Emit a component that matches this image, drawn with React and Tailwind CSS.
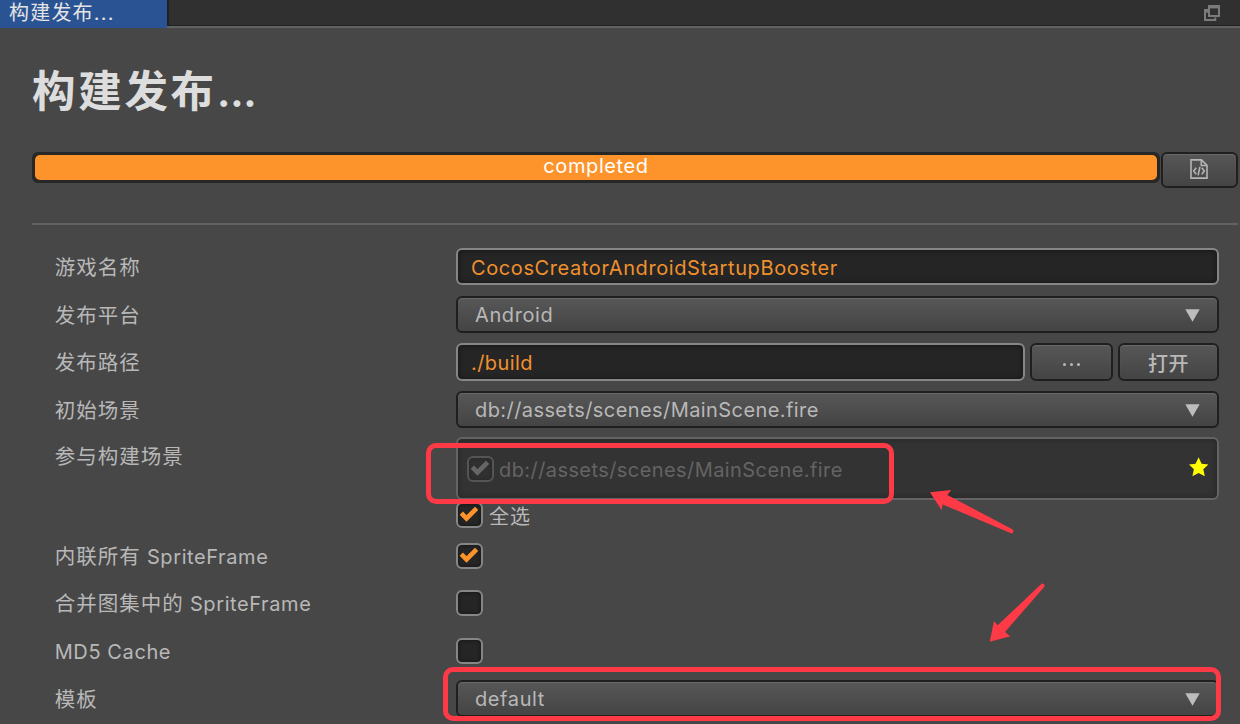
const RAISED =
  "border-2 border-[#1f1f1f] rounded-[6px] bg-linear-to-b from-[#575757] to-[#444444] shadow-[inset_0_1px_1px_#6a6a6a]";
const SUNKEN =
  "border-2 border-[#868686] rounded-[6px] bg-[#252525] shadow-[inset_0_0_4px_1px_#191919]";

function Row({ label, latin, children, className }) {
  return (
    <div className={`flex ${className}`}>
      <div className="w-[402px] shrink-0 pl-[0.7px] leading-[40px] whitespace-nowrap">
        <span className="text-[20.5px] tracking-[1px]">{label}</span>
        {latin && <span className="tracking-[0.6px]">{latin}</span>}
      </div>
      {children}
    </div>
  );
}

function Select({ value, className = "" }) {
  return (
    <div className={`flex h-[37px] w-[763px] items-center justify-between pt-px pr-[17px] pl-[17px] ${RAISED}`}>
      <span className={className}>{value}</span>
      <svg width="15" height="13" viewBox="0 0 15 13" className="mt-px">
        <path d="M0.3 0.3H14.7L7.5 12.8Z" fill="#bdbdbd" />
      </svg>
    </div>
  );
}

function Check({ checked, dim }) {
  return (
    <div
      className={`h-[26px] w-[27px] shrink-0 rounded-[6px] border-2 ${
        dim
          ? "border-[#555555] bg-[#303030] shadow-[inset_0_0_3px_1px_#2a2a2a]"
          : "border-[#868686] bg-[#252525] shadow-[inset_0_0_3px_1px_#191919]"
      }`}
    >
      {checked && (
        <svg width="23" height="22" viewBox="0 0 23 22">
          <path d="M3.3 9.2L8.5 14.4L18.6 4.4" fill="none" stroke={dim ? "#666666" : "#fd942b"} strokeWidth="4.6" />
        </svg>
      )}
    </div>
  );
}

export default function App() {
  return (
    <div className="relative flex h-[724px] w-[1240px] flex-col overflow-hidden bg-[#474747] font-['Inter','Noto_Sans_CJK_SC',sans-serif] text-[20px] tracking-[0.6px] text-[#b8b8b8]">
      <header className="flex h-[28px] shrink-0">
        <div className="w-[167px] bg-[#2a5394] pl-[9px] text-[20px] leading-[26px] tracking-[1.2px] text-[#e4e4e4]">
          构建发布...
        </div>
        <div className="flex h-[28px] flex-1 items-start justify-end border-b-2 border-[#626262] bg-[#303030] pt-[5px] pr-[20px] shadow-[inset_2px_-1px_0_#202020]">
          <svg width="16" height="16" viewBox="0 0 16 16" fill="none" stroke="#7b7b7b">
            <path d="M5 1.5H15V11H5Z" strokeWidth="2" />
            <path d="M4 1.7H16" strokeWidth="3.4" />
            <path d="M4 5H1V15H11.3V12.5" strokeWidth="2" />
            <path d="M0 6H4" strokeWidth="3.4" />
          </svg>
        </div>
      </header>

      <h1 className="mt-[30px] ml-[32px] h-[66px] text-[43.5px] leading-[66px] font-semibold tracking-[2.7px] text-[#dddddd]">
        构建发布<span className="tracking-[-0.8px]">...</span>
      </h1>

      <div className="mt-[28px] flex h-[37px] items-start pl-[32px]">
        <div className="h-[31px] w-[1128px] rounded-[6px] bg-[#272727] p-[3px]">
          <div className="h-[25px] rounded-[5px] bg-[#fd942b] text-center leading-[22px] text-white">completed</div>
        </div>
        <div className={`ml-px flex h-[36px] w-[77px] items-start justify-center pt-[5px] pr-[2px] ${RAISED}`}>
          <svg width="18" height="20" viewBox="0 0 18 20" fill="none" stroke="#b4b4b4" strokeWidth="1.6">
            <path d="M1 0.9H11.5L17 6.4V19.1H1Z" />
            <path d="M11.3 1V6.5H17" />
            <path d="M6.2 8.7L3.7 12L6.2 15.3M11.8 8.7L14.3 12L11.8 15.3M9.9 7.8L8.1 16.3" />
          </svg>
        </div>
      </div>

      <div className="mt-[34px] ml-[32px] h-[2px] w-[1206px] shrink-0 bg-[#626262]" />

      <main className="flex flex-col pt-[23px] pl-[54px]">
        <Row label="游戏名称" className="h-[48px]">
          <div className={`h-[37px] w-[763px] pl-[13px] leading-[36px] text-[#f0912d] ${SUNKEN}`}>
            CocosCreatorAndroidStartupBooster
          </div>
        </Row>
        <Row label="发布平台" className="h-[47px]">
          <Select value="Android" />
        </Row>
        <Row label="发布路径" className="h-[48px]">
          <div className={`h-[38px] w-[569px] pl-[13px] leading-[36px] tracking-[0.4px] text-[#f0912d] ${SUNKEN}`}>
            ./build
          </div>
          <div className={`ml-[5px] flex h-[38px] w-[83px] items-center justify-center gap-[4px] pt-[5px] ${RAISED}`}>
            <span className="h-[3px] w-[3px] rounded-full bg-[#b8b8b8]" />
            <span className="h-[3px] w-[3px] rounded-full bg-[#b8b8b8]" />
            <span className="h-[3px] w-[3px] rounded-full bg-[#b8b8b8]" />
          </div>
          <div className={`ml-[5px] h-[38px] w-[101px] text-center leading-[38px] font-medium ${RAISED}`}>打开</div>
        </Row>
        <Row label="初始场景" className="h-[46px]">
          <Select value="db://assets/scenes/MainScene.fire" className="tracking-[0.42px]" />
        </Row>
        <Row label="参与构建场景" className="h-[65px]">
          <div className="flex h-[63px] w-[763px] items-center rounded-[6px] border-2 border-[#646464] bg-[#333333] pr-[8px] pl-[9px] text-[#646464] shadow-[inset_0_0_5px_1px_#292929]">
            <Check checked dim />
            <span className="mt-[2px] ml-[5px] flex-1 tracking-[0.42px]">db://assets/scenes/MainScene.fire</span>
            <svg width="20" height="20" viewBox="0 0 20 20" className="mb-[3px]">
              <path d="M9.6 0.3L12.6 6.8L19.4 7.6L14.3 12.2L15.8 19.2L9.6 15.9L3.4 19.2L4.9 12.2L0 7.6L6.6 6.8Z" fill="#ffff00" />
            </svg>
          </div>
        </Row>
        <Row label="" className="h-[35px]">
          <Check checked />
          <span className="ml-[6px] leading-[30px] tracking-[1px]">全选</span>
        </Row>
        <Row label="内联所有" latin=" SpriteFrame" className="h-[47px]">
          <div className="pt-[6px]">
            <Check checked />
          </div>
        </Row>
        <Row label="合并图集中的" latin=" SpriteFrame" className="h-[48px]">
          <div className="pt-[6px]">
            <Check />
          </div>
        </Row>
        <Row latin="MD5 Cache" className="h-[48px]">
          <div className="pt-[6px]">
            <Check />
          </div>
        </Row>
        <Row label="模板" className="h-[37px]">
          <Select value="default" />
        </Row>
      </main>

      <div className="absolute top-[443px] left-[426px] h-[61px] w-[468px] rounded-[10px] border-[5.5px] border-[#ff3a47]" />
      <div className="absolute top-[667px] left-[443px] h-[54px] w-[778px] rounded-[10px] border-[5.5px] border-[#ff3a47]" />
      <svg className="absolute top-[480px] left-[920px]" width="140" height="170" viewBox="920 480 140 170" fill="#ff3a47">
        <path d="M930 492.2L951.2 490L947.3 495L1012.3 529.2Q1014 530.5 1013.2 532.2Q1012.4 533.8 1010.5 533L942.6 504.4L941.6 510.2Z" />
        <path d="M989.7 641.8L994 621L997.7 625.3L1041 584.2Q1042.6 582.9 1044 584.2Q1045.3 585.4 1044 587.2L1005 632L1010.3 636.2Z" />
      </svg>
    </div>
  );
}
